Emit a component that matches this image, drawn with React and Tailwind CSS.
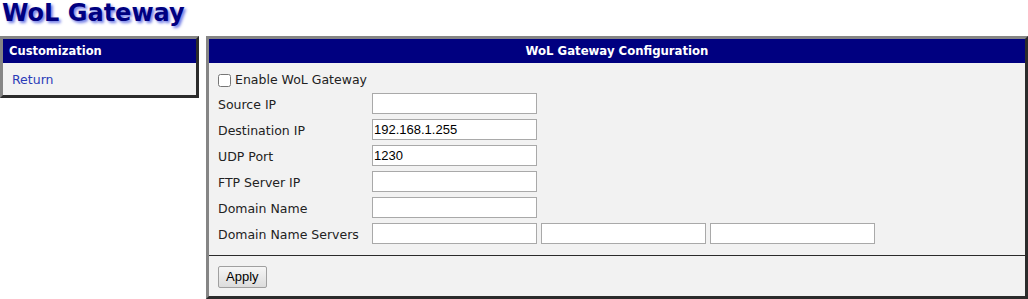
import React from "react";

const panelBorder =
  "border-[3px] border-t-[#858585] border-l-[#858585] border-b-[#2b2b2b] border-r-[#2b2b2b]";

function Field({ label, children }) {
  return (
    <div className="flex h-[26px] items-start">
      <div className="w-[154px] pt-[1px] leading-[21px] text-[12.5px] text-[#222]">{label}</div>
      <div className="flex gap-[4px]">{children}</div>
    </div>
  );
}

function Input({ value = "" }) {
  return (
    <input
      type="text"
      defaultValue={value}
      className="w-[165px] h-[21px] border border-[#a9a9a9] bg-white px-[1px] text-[13px] text-black outline-none font-['Liberation_Sans',sans-serif]"
    />
  );
}

export default function App() {
  return (
    <div className="w-[1028px] h-[299px] bg-white font-['DejaVu_Sans',sans-serif] overflow-hidden">
      <h1 className="text-[24px] font-bold leading-[26px] text-[#000080] pl-[2px] [text-shadow:2px_2px_3px_#6f7be6]">
        WoL Gateway
      </h1>
      <div className="flex gap-[7px] mt-[10px]">
        <div className={`w-[199px] self-start ${panelBorder}`}>
          <div className="bg-[#000080] h-[24px] flex items-center px-[6px] pt-[2px] text-white font-bold text-[11.5px]">
            Customization
          </div>
          <div className="bg-[#f2f2f2] h-[32px] flex items-center px-[9px] pt-[3px] text-[12.5px]">
            <a href="#" className="text-[#2a3cb8]">Return</a>
          </div>
        </div>
        <div className={`flex-1 ${panelBorder} bg-[#f2f2f2]`}>
          <div className="bg-[#000080] h-[24px] flex items-center justify-center pt-[2px] text-white font-bold text-[11.7px]">
            WoL Gateway Configuration
          </div>
          <div className="px-[9px] pt-[4px] pb-[6px]">
            <div className="flex h-[26px] items-center gap-[4px] pt-[1px] text-[12.5px] text-[#222]">
              <input type="checkbox" className="w-[13px] h-[13px] m-0 accent-[#ddd]" />
              <span>Enable WoL Gateway</span>
            </div>
            <Field label="Source IP"><Input /></Field>
            <Field label="Destination IP"><Input value="192.168.1.255" /></Field>
            <Field label="UDP Port"><Input value="1230" /></Field>
            <Field label="FTP Server IP"><Input /></Field>
            <Field label="Domain Name"><Input /></Field>
            <Field label="Domain Name Servers">
              <Input />
              <Input />
              <Input />
            </Field>
          </div>
          <div className="border-t border-t-[#2b2b2b] px-[9px] pt-[8px] pb-[8px]">
            <button className="h-[22px] px-[7px] border border-[#a0a0a0] rounded-[2px] bg-gradient-to-b from-[#f6f6f6] to-[#dcdcdc] text-[13px] text-black font-['Liberation_Sans',sans-serif]">
              Apply
            </button>
          </div>
        </div>
      </div>
    </div>
  );
}
